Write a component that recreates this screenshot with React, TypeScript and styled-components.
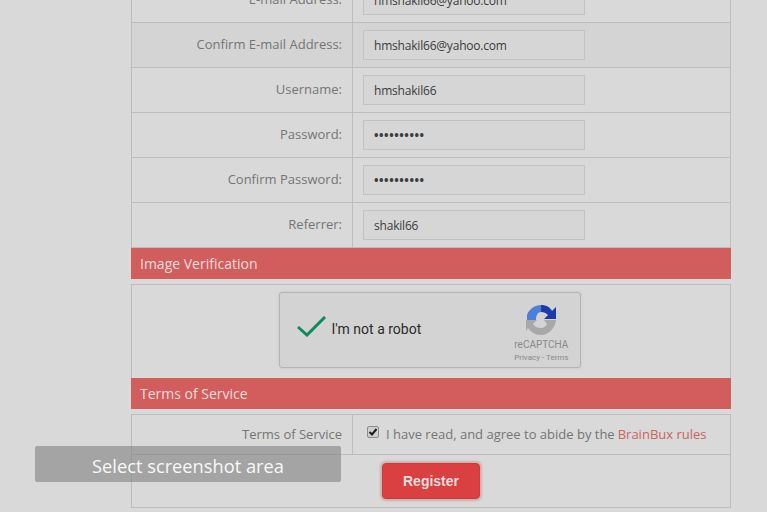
import React from "react";
import styled, { createGlobalStyle } from "styled-components";

const GlobalStyle = createGlobalStyle`
  html, body {
    margin: 0;
    padding: 0;
    height: 512px;
    overflow: hidden;
    background: #d9d9d9;
    font-family: "Open Sans", sans-serif;
  }
`;

const Page = styled.div`
  position: relative;
  width: 767px;
  height: 512px;
  overflow: hidden;
`;

const Sheet = styled.div`
  width: 600px;
  margin: -22px 0 0 131px;
`;

const Table = styled.div`
  border: 1px solid #bdbdbd;
  border-top: 0;
  box-sizing: border-box;
`;

const Row = styled.div<{ $shaded?: boolean }>`
  display: grid;
  grid-template-columns: 221px 1fr;
  height: 45px;
  box-sizing: border-box;
  border-bottom: 1px solid #bdbdbd;
  background: ${({ $shaded }) => ($shaded ? "#d4d4d4" : "transparent")};

  &:last-child {
    height: 44px;
    border-bottom: 0;
  }
`;

const Label = styled.div`
  display: flex;
  align-items: center;
  justify-content: flex-end;
  padding: 0 10px 2px 0;
  border-right: 1px solid #bdbdbd;
  font-size: 13px;
  color: #757575;
`;

const Field = styled.div`
  display: flex;
  align-items: center;
  padding-left: 10px;
`;

const Input = styled.div<{ $dots?: boolean }>`
  width: 222px;
  height: 30px;
  box-sizing: border-box;
  padding: 0 10px;
  border: 1px solid #c2c2c2;
  background: #d6d6d6;
  font-size: 12px;
  line-height: 29px;
  color: #3c3c3c;
  letter-spacing: ${({ $dots }) => ($dots ? "0.55px" : "-0.2px")};
  font-weight: ${({ $dots }) => ($dots ? "700" : "400")};
`;

const SectionBar = styled.div`
  height: 31px;
  padding-left: 9px;
  background: #d15d5d;
  color: #f0dede;
  font-size: 14px;
  line-height: 31px;
`;

const CaptchaBox = styled.div`
  display: flex;
  justify-content: center;
  height: 94px;
  margin-top: 5px;
  padding: 7px 3px 0 0;
  box-sizing: border-box;
  border: 1px solid #bdbdbd;
  border-bottom: 0;
`;

const Captcha = styled.div`
  display: flex;
  align-items: center;
  width: 302px;
  height: 76px;
  box-sizing: border-box;
  padding: 0 11px 0 17px;
  border: 1px solid #b4b4b4;
  border-radius: 3px;
  background: #d3d3d3;
  box-shadow: 0 0 3px #c4c4c4;
  font-family: Roboto, sans-serif;
`;

const CheckMark = styled.svg`
  margin-top: -8px;
`;

const CaptchaText = styled.span`
  flex: 1;
  margin: -2px 0 0 5px;
  font-size: 14px;
  color: #2b2b2b;
`;

const CaptchaBrand = styled.div`
  display: flex;
  flex-direction: column;
  align-items: center;
  padding-top: 7px;
  color: #8a8a8a;
`;

const BrandName = styled.span`
  margin-top: 3px;
  font-size: 10px;
  line-height: 14px;
`;

const BrandLinks = styled.span`
  font-size: 8px;
  line-height: 12px;
`;

const TermsBox = styled.div`
  margin-top: 5px;
  border: 1px solid #bdbdbd;
`;

const TermsRow = styled.div`
  display: grid;
  grid-template-columns: 221px 1fr;
  height: 40px;
  box-sizing: border-box;
  border-bottom: 1px solid #bdbdbd;
`;

const TermsField = styled.div`
  display: flex;
  align-items: center;
  padding: 0 0 1px 14px;
  font-size: 13px;
  color: #757575;
`;

const CheckBox = styled.span`
  display: flex;
  align-items: center;
  justify-content: center;
  width: 12px;
  height: 12px;
  margin: -5px 7px 0 0;
  box-sizing: border-box;
  border: 1px solid #8c8c8c;
  border-radius: 2px;
  background: #cfcfcf;
`;

const RuleLink = styled.a`
  margin-left: 3px;
  color: #c76464;
  text-decoration: none;
`;

const SubmitRow = styled.div`
  display: flex;
  height: 52px;
  padding: 8px 0 0 250px;
  box-sizing: border-box;
`;

const RegisterButton = styled.button`
  width: 98px;
  height: 36px;
  padding: 0;
  border: 1px solid #cc3c3e;
  border-radius: 4px;
  background: #d9403f;
  box-shadow: 0 0 2px 2px #cfb0b0;
  color: #e6dede;
  font-family: "Liberation Sans", sans-serif;
  font-size: 14px;
  font-weight: bold;
`;

const Toast = styled.div`
  position: absolute;
  left: 35px;
  top: 446px;
  width: 306px;
  height: 36px;
  border-radius: 2px;
  background: rgba(130, 130, 130, 0.62);
  color: #f8f8f8;
  font-size: 18.25px;
  line-height: 40px;
  text-align: center;
`;

const RecaptchaLogo = () => (
  <svg width="32" height="32" viewBox="0 0 32 32">
    <path d="M16 2C10 2 4 6 2 12V17H11C11 12 13 9 16 9Z" fill="#4a80d8" />
    <path d="M16 2C21 2 25 4 27 8L31 4V16H19L23 12C21 10 19 9 16 9Z" fill="#1c3aa9" />
    <path
      d="M31 17C30 25 24 32 16 32C10 32 6 29 3 25L1 28V17H12L8 21C10 24 13 25 16 25C19 25 21 23 22 21L19 17Z"
      fill="#a8a8a8"
    />
  </svg>
);

const registerRows = [
  { label: "E-mail Address:", value: "hmshakil66@yahoo.com" },
  { label: "Confirm E-mail Address:", value: "hmshakil66@yahoo.com", shaded: true },
  { label: "Username:", value: "hmshakil66" },
  { label: "Password:", value: "••••••••••", dots: true },
  { label: "Confirm Password:", value: "••••••••••", dots: true },
  { label: "Referrer:", value: "shakil66" },
];

export default function App() {
  return (
    <Page>
      <GlobalStyle />
      <Sheet>
        <Table>
          {registerRows.map((row) => (
            <Row key={row.label} $shaded={row.shaded}>
              <Label>{row.label}</Label>
              <Field>
                <Input $dots={row.dots}>{row.value}</Input>
              </Field>
            </Row>
          ))}
        </Table>
        <SectionBar>Image Verification</SectionBar>
        <CaptchaBox>
          <Captcha>
            <CheckMark width="30" height="21" viewBox="0 0 30 21">
              <path d="M1 11l9 8L28 1" fill="none" stroke="#0f8a5a" strokeWidth="3" />
            </CheckMark>
            <CaptchaText>I'm not a robot</CaptchaText>
            <CaptchaBrand>
              <RecaptchaLogo />
              <BrandName>reCAPTCHA</BrandName>
              <BrandLinks>Privacy - Terms</BrandLinks>
            </CaptchaBrand>
          </Captcha>
        </CaptchaBox>
        <SectionBar>Terms of Service</SectionBar>
        <TermsBox>
          <TermsRow>
            <Label>Terms of Service</Label>
            <TermsField>
              <CheckBox>
                <svg width="10" height="10" viewBox="0 0 10 10">
                  <path d="M1.5 5l2.5 2.5L8.5 2" fill="none" stroke="#1c1c1c" strokeWidth="2" />
                </svg>
              </CheckBox>
              I have read, and agree to abide by the
              <RuleLink href="#">BrainBux rules</RuleLink>
            </TermsField>
          </TermsRow>
          <SubmitRow>
            <RegisterButton>Register</RegisterButton>
          </SubmitRow>
        </TermsBox>
      </Sheet>
      <Toast>Select screenshot area</Toast>
    </Page>
  );
}
